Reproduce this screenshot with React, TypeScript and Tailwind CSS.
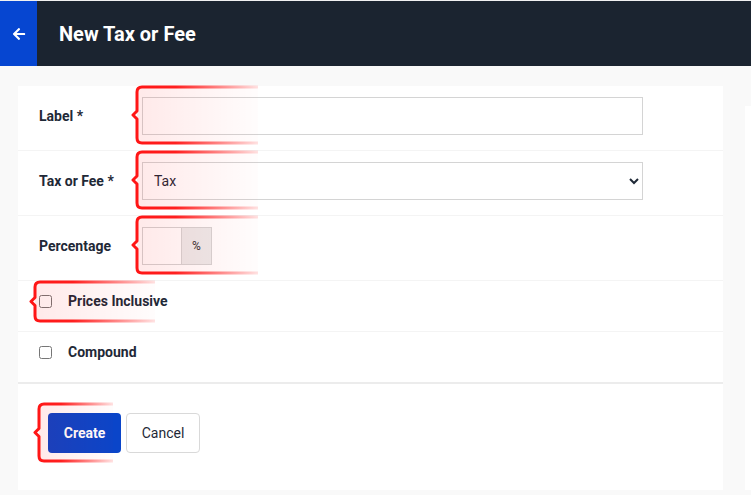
import React from 'react';
import { FaArrowLeft } from 'react-icons/fa';

// red curly-bracket highlight drawn over a field
function Bracket({ w, h, id, className }: { w: number; h: number; id: string; className: string }) {
  const mid = h / 2;
  const d = `M ${w} 2 H 11 Q 6 2 6 7 V ${mid - 4} L 2 ${mid} L 6 ${mid + 4} V ${h - 7} Q 6 ${h - 2} 11 ${h - 2} H ${w}`;
  return (
    <svg
      width={w}
      height={h}
      viewBox={`0 0 ${w} ${h}`}
      className={`absolute pointer-events-none ${className}`}
    >
      <defs>
        <linearGradient id={`${id}-s`} gradientUnits="userSpaceOnUse" x1="0" y1="0" x2={w} y2="0">
          <stop offset="0" stopColor="#ff1414" stopOpacity="1" />
          <stop offset="0.35" stopColor="#ff1414" stopOpacity="0.95" />
          <stop offset="1" stopColor="#ff1414" stopOpacity="0.12" />
        </linearGradient>
        <linearGradient id={`${id}-f`} gradientUnits="userSpaceOnUse" x1="0" y1="0" x2={w} y2="0">
          <stop offset="0" stopColor="#ff0000" stopOpacity="0.09" />
          <stop offset="1" stopColor="#ff0000" stopOpacity="0.01" />
        </linearGradient>
      </defs>
      <rect x="6" y="2" width={w - 6} height={h - 4} fill={`url(#${id}-f)`} />
      <path d={d} fill="none" stroke={`url(#${id}-s)`} strokeWidth="3" strokeLinejoin="round" />
    </svg>
  );
}

export default function App() {
  return (
    <div className="h-screen bg-[#f9f9f9] font-['Roboto',sans-serif] text-[#1f2937] overflow-hidden">
      <div className="h-px bg-[#f1f1f1]" />
      {/* Header */}
      <div className="h-[65px] flex items-stretch bg-[#1b2430]">
        <div className="w-[37px] bg-[#0646d1] flex items-center justify-center text-white">
          <FaArrowLeft size={14} />
        </div>
        <h1 className="ml-[22px] self-center text-white text-[20px] font-bold">New Tax or Fee</h1>
      </div>

      <div className="flex pl-[18px] pt-[20px] gap-[22px]">
        {/* Form card */}
        <div className="w-[705px] bg-white">
          <div className="flex items-center px-[21px] pt-[11px] pb-[15px] border-b border-[#f4f4f4]">
            <label className="w-[103px] text-sm font-bold">Label *</label>
            <div className="relative">
              <input className="w-[501px] h-[38px] border border-[#d4d4d4] bg-white px-[10px] text-sm outline-none" />
              <Bracket id="b1" w={127} h={60} className="-left-[11px] -top-[12px]" />
            </div>
          </div>

          <div className="flex items-center px-[21px] pt-[11px] pb-[15px] border-b border-[#f4f4f4]">
            <label className="w-[103px] text-sm font-bold">Tax or Fee *</label>
            <div className="relative">
              <select className="w-[501px] h-[38px] border border-[#d4d4d4] bg-white pl-[7px] pr-[6px] text-sm text-[#1f2937] outline-none">
                <option>Tax</option>
                <option>Fee</option>
              </select>
              <Bracket id="b2" w={127} h={60} className="-left-[11px] -top-[12px]" />
            </div>
          </div>

          <div className="flex items-center px-[21px] pt-[11px] pb-[15px] border-b border-[#f4f4f4]">
            <label className="w-[103px] text-sm font-bold">Percentage</label>
            <div className="relative flex">
              <input className="w-[40px] h-[38px] border border-[#d4d4d4] bg-white px-[6px] text-sm outline-none" />
              <span className="w-[30px] h-[38px] flex items-center justify-center border border-l-0 border-[#d4d4d4] bg-[#ebebeb] text-xs text-[#333]">
                %
              </span>
              <Bracket id="b3" w={127} h={60} className="-left-[11px] -top-[12px]" />
            </div>
          </div>

          <div className="flex items-center px-[21px] pt-[10px] pb-[20px] border-b border-[#f4f4f4]">
            <div className="relative flex items-center">
              <input type="checkbox" className="m-0 w-[13px] h-[13px]" />
              <Bracket id="b4" w={126} h={43} className="-left-[10px] -top-[15px]" />
            </div>
            <span className="ml-[16px] text-sm font-bold leading-5">Prices Inclusive</span>
          </div>

          <div className="flex items-center px-[21px] pt-[10px] pb-[20px]">
            <input type="checkbox" className="m-0 w-[13px] h-[13px]" />
            <span className="ml-[16px] text-sm font-bold leading-5">Compound</span>
          </div>

          <div className="border-t-2 border-[#ececec] pt-[29px] pb-[36px] pl-[30px] flex gap-[5px]">
            <div className="relative">
              <button className="w-[73px] h-[40px] rounded bg-[#0a45c9] text-white text-sm font-bold">Create</button>
              <Bracket id="b5" w={80} h={61} className="-left-[15px] -top-[11px]" />
            </div>
            <button className="w-[74px] h-[40px] rounded border border-[#d9d9d9] bg-white text-sm text-[#1f2937]">
              Cancel
            </button>
          </div>
        </div>

        {/* Side panel */}
        <div className="flex-1 mt-[20px] bg-white h-[384px]" />
      </div>
    </div>
  );
}
